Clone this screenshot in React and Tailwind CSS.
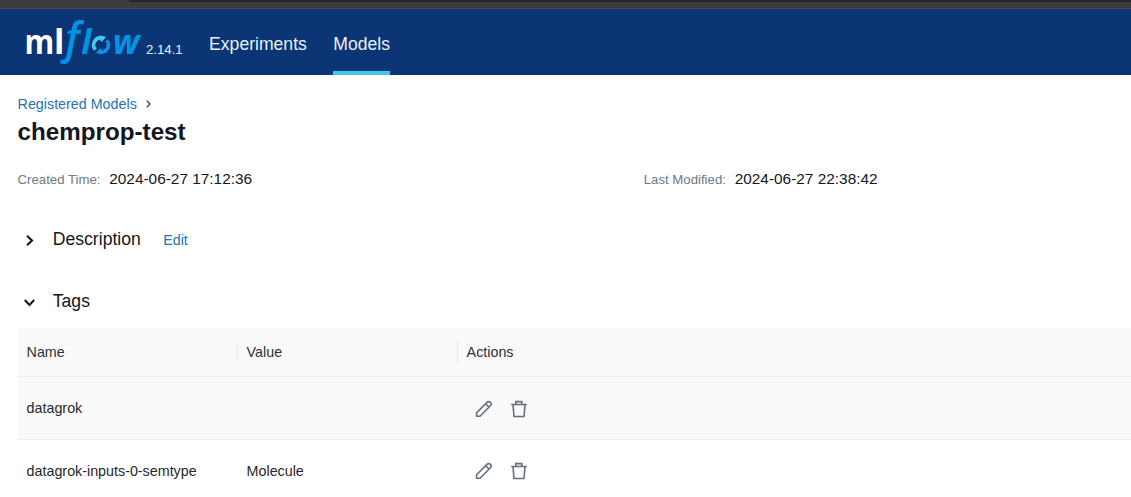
import React from "react";

function Logo() {
  return (
    <svg width="118" height="48" viewBox="25 18 118 48" className="block shrink-0 overflow-visible" aria-label="mlflow">
      <g fontFamily="'Open Sans', 'Noto Sans', sans-serif">
        <text transform="translate(24.5 54) scale(0.89 1)" fontSize="34" fontWeight="700" fill="#fff">m</text>
        <text transform="translate(54 54)" fontSize="34" fontWeight="700" fill="#fff">l</text>
        <g fill="#0194e2" fontStyle="italic">
          <text transform="translate(65.3 54) scale(0.96 1)" fontSize="43.5" fontWeight="600">f</text>
          <text transform="translate(81.3 54)" fontSize="34" fontWeight="700">l</text>
          <text transform="translate(112.7 54)" fontSize="34" fontWeight="700">w</text>
        </g>
      </g>
      <g fill="none" strokeWidth="3.6">
        <path d="M95.4 49.7A7.3 7.3 0 0 1 102.3 37.8" stroke="#43c9ed" />
        <path d="M106.6 40.3A7.3 7.3 0 0 1 99.7 52.2" stroke="#0194e2" />
      </g>
      <path d="M101.5 35.8L106.2 37L101.6 42L100 39.5Z" fill="#43c9ed" />
      <path d="M100.5 54.1L95.8 53L100.4 48L102 50.5Z" fill="#0194e2" />
    </svg>
  );
}

function Pencil() {
  return (
    <svg width="18" height="18" viewBox="0 0 18 18" fill="none" stroke="#5f7281" strokeWidth="1.6" strokeLinejoin="round">
      <path d="M1.6 16.2V12.8L12 2.4a2.35 2.35 0 0 1 3.4 3.4L5 16.2zM10.7 3.8l3.4 3.4" />
    </svg>
  );
}

function Trash() {
  return (
    <svg width="18" height="18" viewBox="0 0 18 18" fill="none" stroke="#5f7281" strokeWidth="1.6">
      <path d="M1.2 4.5h15.6M5.8 4.2V1.6h6v2.6M3 4.8l1 11.7h10l1-11.7" />
    </svg>
  );
}

function Chevron({ down }) {
  return (
    <svg width="13" height="13" viewBox="0 0 13 13" fill="none" stroke="#11171c" strokeWidth="2.1" className={down ? "rotate-90" : ""}>
      <path d="M4 1.8L9 6.5L4 11.2" />
    </svg>
  );
}

function Time({ label, value, className }) {
  return (
    <div className={`flex items-baseline ${className}`}>
      <span className="text-[13.2px] text-[#6b7b88]">{label}</span>
      <span className="ml-[8.8px] text-[15.4px] text-[#11171c]">{value}</span>
    </div>
  );
}

function Row({ name, value, shaded }) {
  return (
    <div className={`flex h-[63px] items-center border-b border-[#ededed] text-[14.3px] text-[#1f272d] ${shaded ? "bg-[#fafafa]" : "bg-white"}`}>
      <div className="w-[220px] pl-[9px] pt-[2px]">{name}</div>
      <div className="w-[220px] pl-[9px] pt-[2px]">{value}</div>
      <div className={`flex gap-[17px] pl-[17px] ${shaded ? "pt-[2px]" : ""}`}>
        <Pencil />
        <Trash />
      </div>
    </div>
  );
}

export default function App() {
  return (
    <div className="h-[497px] w-full overflow-hidden bg-white font-['Liberation_Sans',Arial,sans-serif] text-[#11171c]">
      <div className="h-[9px] border-b border-[#484848] bg-[#3c3c3c]">
        <div className="ml-[129px] h-[2px] rounded-bl bg-[#262626]" />
      </div>
      <header className="flex h-[66px] bg-[#0b3574] pl-[25px] text-[#e7f1fb]">
        <div className="pt-[9px]"><Logo /></div>
        <span className="ml-[3px] pt-[31px] text-[13.2px] leading-5">2.14.1</span>
        <nav className="ml-[26.4px] flex gap-[26.4px] text-[17.6px] leading-[26px]">
          <a className="pt-[22px]">Experiments</a>
          <a className="border-b-4 border-[#43c9ed] pt-[22px]">Models</a>
        </nav>
      </header>
      <main className="pl-[17.6px]">
        <div className="mt-[18px] flex h-[22px] items-center text-[14.3px] leading-[22px] text-[#2272b4]">
          <a>Registered Models</a>
          <svg width="9" height="12" viewBox="0 0 9 12" fill="none" stroke="#44535f" strokeWidth="1.5" className="ml-[7px]">
            <path d="M2.8 2.8L6 6L2.8 9.2" />
          </svg>
        </div>
        <h1 className="mt-[2px] text-[24.2px] font-bold leading-[30px]">chemprop-test</h1>
        <div className="mt-[21px] flex h-[22px] items-center">
          <Time label="Created Time:" value="2024-06-27 17:12:36" className="w-[626.2px]" />
          <Time label="Last Modified:" value="2024-06-27 22:38:42" className="" />
        </div>
        <div className="mt-[37px] flex h-[24px] items-center">
          <span className="ml-[5px] mt-[2px]"><Chevron /></span>
          <h2 className="ml-[17.2px] text-[17.6px] leading-6">Description</h2>
          <a className="ml-[22.4px] mt-[3px] text-[14.3px] text-[#2272b4]">Edit</a>
        </div>
        <div className="mt-[38px] flex h-[24px] items-center">
          <span className="ml-[5px] mt-[2px]"><Chevron down /></span>
          <h2 className="ml-[17.2px] text-[17.6px] leading-6">Tags</h2>
        </div>
        <section className="mt-[15px]">
          <div className="flex h-[49px] items-center rounded-tl border-b border-[#ededed] bg-[#fafafa] text-[14.3px] text-[#2a3136]">
            <div className="flex h-6 w-[220px] items-center border-r border-[#e9e9e9] pl-[9px] pt-[2px]">Name</div>
            <div className="flex h-6 w-[220px] items-center border-r border-[#e9e9e9] pl-[9px] pt-[2px]">Value</div>
            <div className="pl-[9px] pt-[2px]">Actions</div>
          </div>
          <Row name="datagrok" value="" shaded />
          <Row name="datagrok-inputs-0-semtype" value="Molecule" />
        </section>
      </main>
    </div>
  );
}
